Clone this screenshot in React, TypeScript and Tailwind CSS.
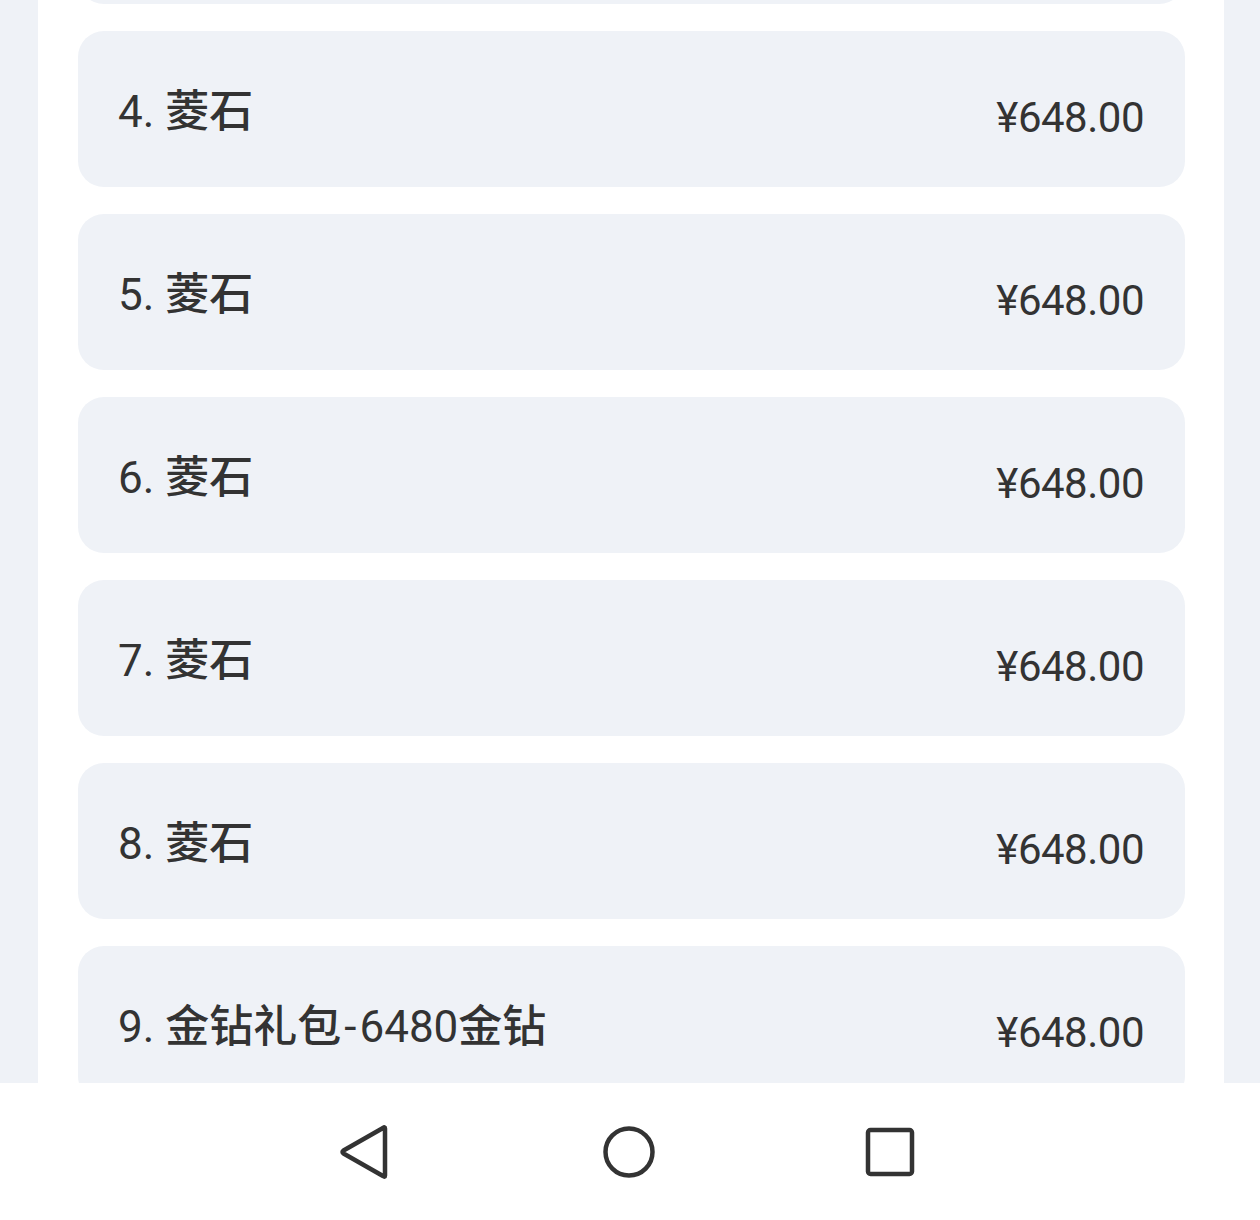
import React from "react";

const items = [
  { n: "3.", name: [["菱石", true]] },
  { n: "4.", name: [["菱石", true]] },
  { n: "5.", name: [["菱石", true]] },
  { n: "6.", name: [["菱石", true]] },
  { n: "7.", name: [["菱石", true]] },
  { n: "8.", name: [["菱石", true]] },
  {
    n: "9.",
    name: [
      ["金钻礼包", true],
      ["-", false],
      ["6480", false],
      ["金钻", true],
    ],
  },
] as { n: string; name: [string, boolean][] }[];

export default function App() {
  return (
    <div
      className="w-[1260px] h-[1220px] overflow-hidden flex flex-col bg-white text-[#333333]"
      style={{ fontFamily: 'Roboto, "Noto Sans CJK SC", sans-serif' }}
    >
      <div className="flex-1 min-h-0 bg-[#eff2f7] pl-[38px] pr-[36px] overflow-hidden">
        <div className="h-full bg-white pl-[40px] pr-[39px] overflow-hidden">
          <div className="flex flex-col gap-[27px] -mt-[152px]">
            {items.map((it, i) => (
              <div
                key={i}
                className="h-[156px] shrink-0 rounded-[26px] bg-[#eff2f7] pl-[40px] pr-[41px] flex items-center justify-between"
              >
                <div className="text-[44px] leading-none mt-[6px]">
                  {it.n}{" "}
                  {it.name.map(([t, cjk], j) => (
                    <span
                      key={j}
                      className={cjk ? "font-medium" : t === "-" ? "inline-block px-[3px]" : ""}
                    >
                      {t}
                    </span>
                  ))}
                </div>
                <div className="text-[42px] leading-none mt-[18px] tracking-[-0.5px]">¥648.00</div>
              </div>
            ))}
          </div>
        </div>
      </div>
      <div className="h-[137px] shrink-0 bg-white flex items-center justify-center">
        <svg width="52" height="56" viewBox="0 0 52 56" fill="none" className="mr-[210px]">
          <path
            d="M45 4.5 L45 51.5 Q45 53.5 43 52 L3.5 29.5 Q1.5 28 3.5 26.5 L43 4 Q45 2.5 45 4.5 Z"
            stroke="#333"
            strokeWidth="4.5"
            strokeLinejoin="round"
          />
        </svg>
        <svg width="54" height="54" viewBox="0 0 54 54" fill="none">
          <circle cx="27" cy="27" r="23.5" stroke="#333" strokeWidth="4.5" />
        </svg>
        <svg width="52" height="52" viewBox="0 0 52 52" fill="none" className="ml-[208px] mr-[4px]">
          <rect x="4" y="4" width="44" height="44" rx="2.5" stroke="#333" strokeWidth="4.5" />
        </svg>
      </div>
    </div>
  );
}
